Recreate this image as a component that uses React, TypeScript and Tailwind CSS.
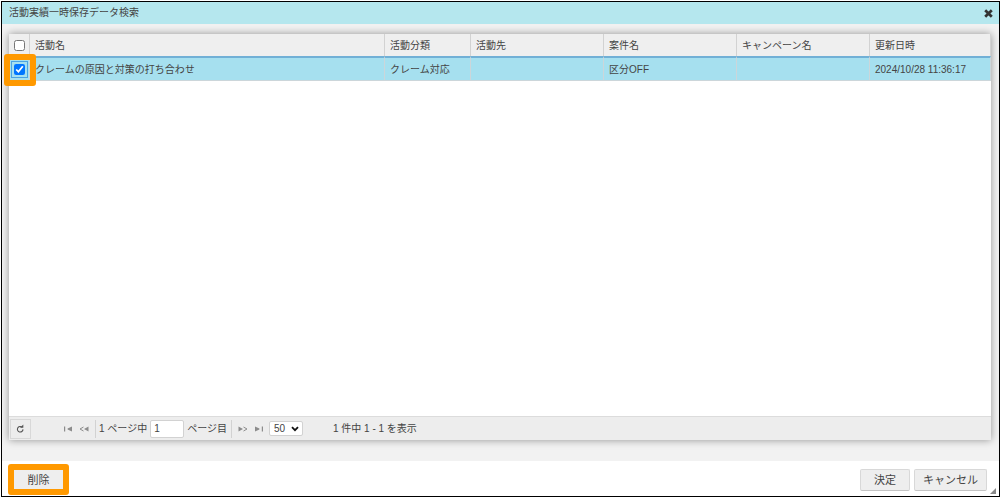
import { useState } from "react";

interface Activity {
  id: number;
  name: string;
  category: string;
  destination: string;
  matter: string;
  campaign: string;
  updatedAt: string;
}

const activities: Activity[] = [
  {
    id: 1,
    name: "クレームの原因と対策の打ち合わせ",
    category: "クレーム対応",
    destination: "",
    matter: "区分OFF",
    campaign: "",
    updatedAt: "2024/10/28 11:36:17",
  },
];

const headers = ["活動名", "活動分類", "活動先", "案件名", "キャンペーン名", "更新日時"];

function CloseIcon() {
  return (
    <svg width="9" height="9" viewBox="0 0 9 9">
      <path d="M1.2 1.2 7.8 7.8M7.8 1.2 1.2 7.8" stroke="#333" strokeWidth="2.7" />
    </svg>
  );
}

function RefreshIcon() {
  return (
    <svg width="9" height="10" viewBox="0 0 9 10" fill="none">
      <path d="M6 3.1A2.8 2.8 0 1 0 7 5.4" stroke="#555" strokeWidth="1.1" />
      <path d="M4 3.7H7.3V0.4Z" fill="#555" />
    </svg>
  );
}

function FirstIcon() {
  return (
    <svg width="8" height="6" viewBox="0 0 8 6" fill="#8c8c8c">
      <path d="M0 0.5h1.2v5H0zM8 0.5v5L3.6 3.5v-1z" />
    </svg>
  );
}

function PrevIcon() {
  return (
    <svg width="10" height="6" viewBox="0 0 10 6" fill="none">
      <path d="M4.5 1 1 3l3.5 2" stroke="#8c8c8c" />
      <path d="M9.5 0.5v5L5 3z" fill="#8c8c8c" />
    </svg>
  );
}

// pager arrow buttons, the "next" side reuses the icons mirrored
function PagerButton({ label, flip, children }: { label: string; flip?: boolean; children: React.ReactNode }) {
  return (
    <button type="button" aria-label={label} className={flip ? "-scale-x-100" : ""}>
      {children}
    </button>
  );
}

function HeaderCell({ children }: { children: string }) {
  return (
    <th className="h-[22px] border-r border-[#d2d2d2] px-[5px] pt-[2px] text-left font-normal">{children}</th>
  );
}

function Cell({ children }: { children: string }) {
  return <td className="h-[23px] border-r border-b border-[#ccd6da] px-[5px] pt-px">{children}</td>;
}

export default function App() {
  const [selected, setSelected] = useState<number[]>([1]);
  const [page, setPage] = useState("1");

  const toggle = (id: number) => {
    setSelected(selected.includes(id) ? selected.filter((s) => s !== id) : [...selected, id]);
  };

  return (
    <div className="h-screen bg-white pt-px pl-px font-['Liberation_Sans','Noto_Sans_CJK_JP',sans-serif] text-[10px] leading-4 text-[#444]">
      <div className="relative flex h-full flex-col border border-black">
        <header className="flex h-[22px] shrink-0 items-center justify-between bg-[#b5e7ee] pr-[6px] pl-[7px]">
          <h1>活動実績一時保存データ検索</h1>
          <button type="button" aria-label="閉じる">
            <CloseIcon />
          </button>
        </header>

        <main className="flex flex-1 bg-[#f2f2f2] pt-[10px] pr-2 pb-[21px] pl-[7px]">
          <div className="flex flex-1 flex-col bg-white shadow-[0_0_8px_rgba(0,0,0,0.4)]">
            <table className="w-full table-fixed border-separate border-spacing-0">
              <colgroup>
                <col className="w-[21px]" />
                <col />
                <col className="w-[86px]" />
                <col className="w-[133px]" />
                <col className="w-[133px]" />
                <col className="w-[133px]" />
                <col className="w-[121px]" />
              </colgroup>
              <thead className="bg-[#efefef]">
                <tr>
                  <th className="border-r border-[#d2d2d2]">
                    <input type="checkbox" aria-label="すべて選択" className="mx-auto block size-[11px]" />
                  </th>
                  {headers.map((h) => (
                    <HeaderCell key={h}>{h}</HeaderCell>
                  ))}
                </tr>
              </thead>
              <tbody>
                {activities.map((a) => (
                  <tr key={a.id} className="bg-[#a6e0ef] [&>td]:border-t-2 [&>td]:border-t-[#71b0d6]">
                    <td className="relative h-[25px] border-r border-b border-[#ccd6da]">
                      <input
                        type="checkbox"
                        aria-label={a.name}
                        checked={selected.includes(a.id)}
                        onChange={() => toggle(a.id)}
                        className="mx-auto block size-[11px] accent-[#0075ff] outline outline-offset-2 outline-[#4ba3e3]"
                      />
                      <span className="pointer-events-none absolute -top-1 -left-[5px] z-10 h-8 w-8 rounded-[3px] border-[6px] border-[#ff9900]" />
                    </td>
                    <Cell>{a.name}</Cell>
                    <Cell>{a.category}</Cell>
                    <Cell>{a.destination}</Cell>
                    <Cell>{a.matter}</Cell>
                    <Cell>{a.campaign}</Cell>
                    <Cell>{a.updatedAt}</Cell>
                  </tr>
                ))}
              </tbody>
            </table>

            <div className="mt-auto flex h-6 items-center border-t border-[#dcdcdc] bg-[#ededed] pl-px">
              <button
                type="button"
                aria-label="再読み込み"
                className="flex h-5 w-[21px] items-center justify-center border border-[#d8d8d8]"
              >
                <RefreshIcon />
              </button>
              <div className="ml-[33px] flex items-center gap-[7px]">
                <PagerButton label="最初のページ"><FirstIcon /></PagerButton>
                <PagerButton label="前のページ"><PrevIcon /></PagerButton>
              </div>
              <label className="ml-[6px] flex items-center gap-[3px] border-x border-[#d2d2d2] px-[3px]">
                1 ページ中
                <input
                  type="text"
                  value={page}
                  onChange={(e) => setPage(e.target.value)}
                  className="h-[18px] w-[34px] rounded-[2px] border border-[#d2d2d2] bg-white px-[3px]"
                />
                <span className="pr-px">ページ目</span>
              </label>
              <div className="ml-[6px] flex items-center gap-[7px]">
                <PagerButton label="次のページ" flip><PrevIcon /></PagerButton>
                <PagerButton label="最後のページ" flip><FirstIcon /></PagerButton>
              </div>
              <div className="relative ml-[6px]">
                <select
                  aria-label="表示件数"
                  defaultValue="50"
                  className="block h-[15px] w-[34px] appearance-none rounded-[2px] border border-[#d2d2d2] bg-white pl-1 leading-3"
                >
                  <option>50</option>
                  <option>100</option>
                </select>
                <svg className="pointer-events-none absolute top-[5px] right-1" width="8" height="6" viewBox="0 0 8 6" fill="none">
                  <path d="M1 1.2 4 4.2 7 1.2" stroke="#111" strokeWidth="1.8" />
                </svg>
              </div>
              <p className="ml-[30px]">1 件中 1 - 1 を表示</p>
            </div>
          </div>
        </main>

        <footer className="flex h-[35px] shrink-0 items-center justify-between bg-white pt-[2px] pr-3 pl-[6px] text-[11px]">
          <button
            type="button"
            className="h-[31px] w-[61px] rounded-[3px] border-[6px] border-[#ff9900] bg-[#eee]"
          >
            削除
          </button>
          <div className="flex gap-1">
            <button type="button" className="h-[22px] w-[50px] rounded-[2px] border border-[#d8d8d8] border-b-[#c4c4c4] bg-[#eee]">
              決定
            </button>
            <button type="button" className="h-[22px] w-[73px] rounded-[2px] border border-[#d8d8d8] border-b-[#c4c4c4] bg-[#eee]">
              キャンセル
            </button>
          </div>
        </footer>
        <svg className="absolute right-[3px] bottom-[2px]" width="6" height="6" viewBox="0 0 6 6">
          <path d="M6 0v6H0z" fill="#888" />
        </svg>
      </div>
    </div>
  );
}
